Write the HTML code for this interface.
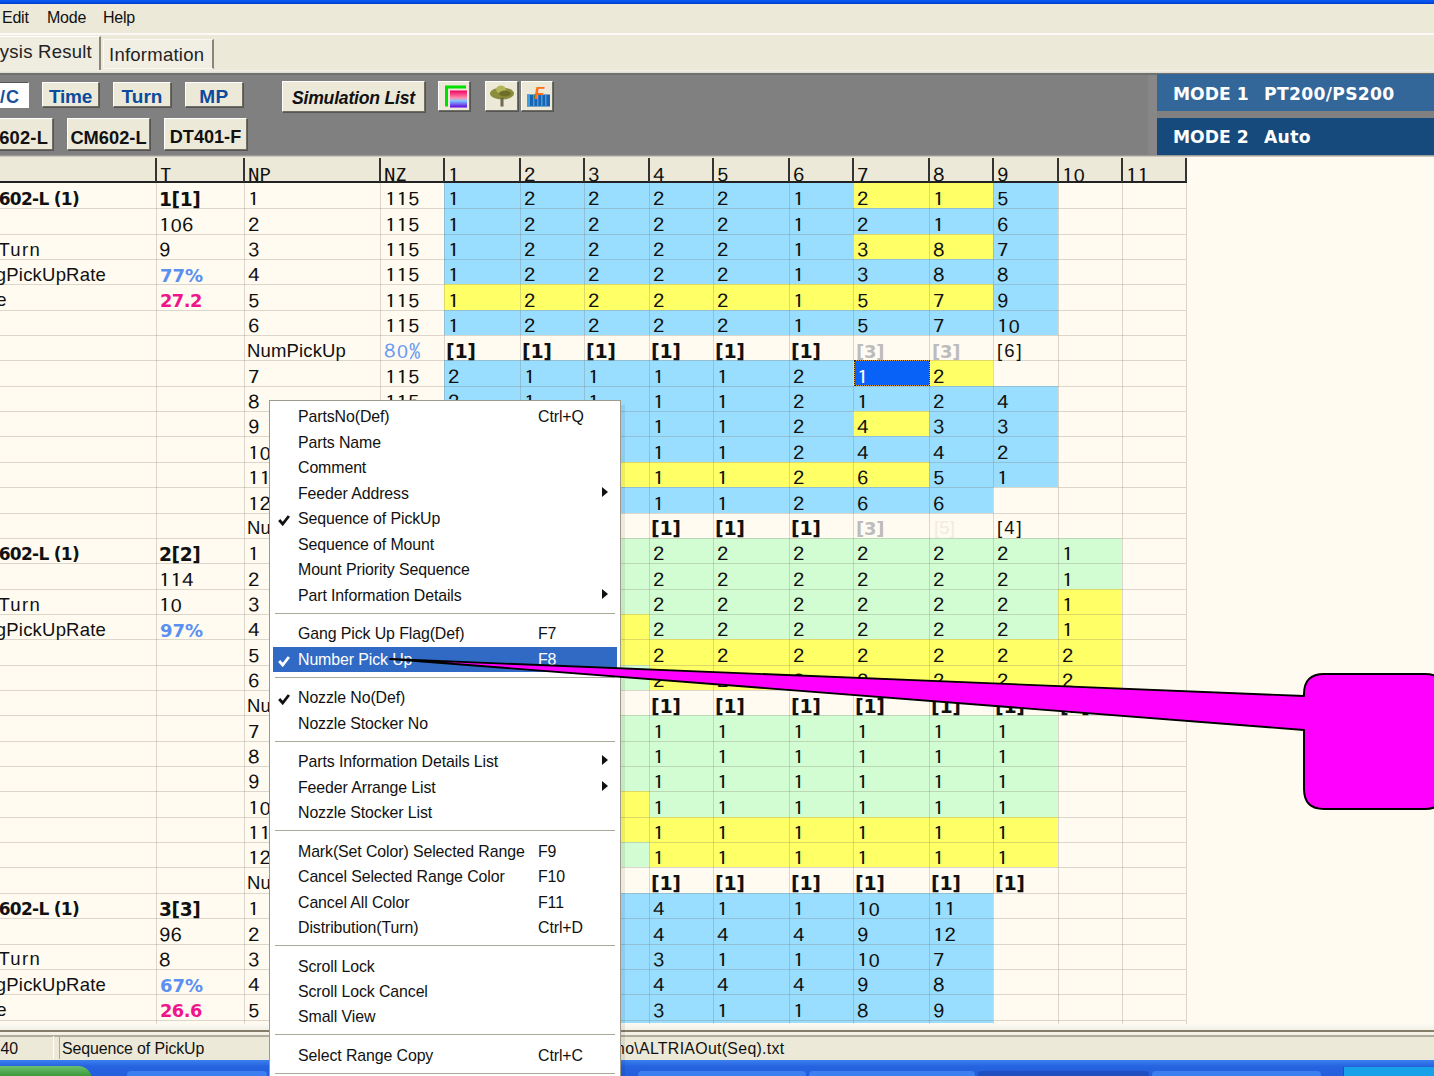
<!DOCTYPE html>
<html lang="en"><head><meta charset="utf-8"><title>Analysis Result</title>
<style>
*{margin:0;padding:0;box-sizing:border-box}
html,body{width:1434px;height:1076px;overflow:hidden;background:#fffbf0;font-family:"Liberation Sans",sans-serif}
#root{position:absolute;left:0;top:0;width:1434px;height:1076px;overflow:hidden;background:#fffbf0}
.abs{position:absolute}
.t{position:absolute;white-space:nowrap;color:#111;font-family:"IPAGothic","Liberation Sans",sans-serif;font-size:18.8px;line-height:25px;height:25px;letter-spacing:0;transform:scaleX(1.22);transform-origin:0 50%}
.b{transform:none;font-weight:bold;letter-spacing:-.4px;font-family:'DejaVu Sans',sans-serif;font-size:17px}
.z{display:inline-block;font-family:"Liberation Sans",sans-serif;font-size:18.3px;transform:scaleX(.88);margin:0 -.4px}
.l{transform:none;font-family:"Liberation Sans",sans-serif;font-size:18.5px;letter-spacing:.15px;margin-top:-.4px}
.hl{position:absolute;left:0;width:1186px;height:1px;background:rgba(125,115,105,.27)}
.vl{position:absolute;top:183px;width:1px;height:841px;background:rgba(125,115,105,.27)}
.cell{position:absolute}
.hd{position:absolute;top:157px;height:26px;background:#ece9d8;border-bottom:2px solid #222}
.hs{position:absolute;top:158px;width:2px;height:24px;background:#333}
.ht{position:absolute;top:163.5px;font-family:"IPAGothic","Liberation Sans",sans-serif;font-size:18.8px;line-height:22px;color:#111;letter-spacing:0;transform:scaleX(1.22);transform-origin:0 50%}
.btn{position:absolute;background:#ece9d8;border:1px solid #fff;border-right-color:#716f64;border-bottom-color:#716f64;box-shadow:1px 1px 0 #555;text-align:center;font-weight:bold;white-space:nowrap}
.mi{position:absolute;left:298px;font-size:15.9px;letter-spacing:-.1px;line-height:20px;color:#111;white-space:nowrap}
.mk{position:absolute;left:538px;font-size:15.9px;letter-spacing:-.1px;line-height:20px;color:#111;white-space:nowrap}
.sep{position:absolute;left:275px;width:340px;height:1px;background:#aca899}
.arr{position:absolute;left:601.5px;width:0;height:0;border-left:6px solid #111;border-top:5.5px solid transparent;border-bottom:5.5px solid transparent}
.chk{position:absolute;left:278px}
</style></head>
<body><div id="root">
<div class="abs" style="left:0;top:0;width:1434px;height:4px;background:linear-gradient(#0c5cf5,#0048e0 70%,#0038c0)"></div>
<div class="abs" style="left:0;top:4px;width:1434px;height:29px;background:#ece9d8"></div>
<div class="abs" style="left:0;top:33px;width:1434px;height:2px;background:#fbfaf6"></div>
<div class="abs" style="left:0;top:35px;width:1434px;height:37px;background:#ece9d8"></div>
<div class="abs" style="left:2px;top:8.3px;font-size:16px;letter-spacing:-.25px;line-height:20px;color:#111">Edit</div>
<div class="abs" style="left:47px;top:8.3px;font-size:16px;letter-spacing:-.25px;line-height:20px;color:#111">Mode</div>
<div class="abs" style="left:103px;top:8.3px;font-size:16px;letter-spacing:-.25px;line-height:20px;color:#111">Help</div>
<div class="abs" style="left:-40px;top:36px;width:141px;height:34px;background:#efece0;border-right:2px solid #8a8778;border-top:1px solid #fff"></div>
<div class="abs" style="left:103px;top:39px;width:111px;height:30px;background:#f1efe4;border:1px solid #faf9f4;border-right:2px solid #8a8778"></div>
<div class="abs" style="left:-100px;top:41px;width:192px;text-align:right;font-size:18.5px;line-height:22px;color:#222;letter-spacing:.25px;white-space:nowrap">Analysis Result</div>
<div class="abs" style="left:109px;top:44px;font-size:18.5px;line-height:22px;color:#222;letter-spacing:.25px;white-space:nowrap">Information</div>
<div class="abs" style="left:0;top:70px;width:1434px;height:3px;background:linear-gradient(#f6f4ec,#dcd9cc)"></div>
<div class="abs" style="left:0;top:73px;width:1434px;height:84px;background:linear-gradient(#808080 0,#808080 82px,#b9b6aa 83px,#dedbd0 84px)"></div>
<div class="abs" style="left:0;top:73px;width:1434px;height:2px;background:#707070"></div>
<div class="btn" style="left:-30px;top:82px;width:59px;height:26px;line-height:28px;font-size:18px;color:#14509a;background:#fff;text-align:right;padding-right:8px;letter-spacing:1px;border-color:#555 #fff #fff #555;box-shadow:none">M/C</div>
<div class="btn" style="left:42px;top:82px;width:57px;height:25px;line-height:26px;font-size:19px;color:#0b4a9c;letter-spacing:-.3px;line-height:27px;">Time</div>
<div class="btn" style="left:113px;top:82px;width:58px;height:25px;line-height:26px;font-size:19px;color:#0b4a9c;letter-spacing:0;line-height:27px;">Turn</div>
<div class="btn" style="left:185px;top:82px;width:58px;height:25px;line-height:26px;font-size:19px;color:#0b4a9c;letter-spacing:.5px;line-height:27px;">MP</div>
<div class="btn" style="left:282px;top:81px;width:143px;height:31px;line-height:32px;font-size:17.6px;color:#111;font-style:italic;letter-spacing:-.2px;">Simulation List</div>
<div class="btn" style="left:438px;top:81px;width:32px;height:30px"><svg width="30" height="28" viewBox="0 1.5 30 28"><defs><linearGradient id="g1" x1="0" y1="0" x2="0" y2="1"><stop offset="0" stop-color="#f00060"/><stop offset=".45" stop-color="#ff90b0"/><stop offset=".6" stop-color="#80c8ff"/><stop offset="1" stop-color="#6000e0"/></linearGradient></defs><path d="M6 26V5H27V8H9V26Z" fill="#00e000"/><rect x="11" y="10" width="17" height="17" fill="url(#g1)"/></svg></div>
<div class="btn" style="left:485px;top:81px;width:33px;height:30px"><svg width="31" height="28" viewBox="0 1.5 31 28"><ellipse cx="16" cy="13" rx="12" ry="6" fill="#8c8c3c"/><ellipse cx="15" cy="9" rx="5" ry="4" fill="#b4b45a"/><ellipse cx="19" cy="13" rx="6" ry="3" fill="#6e6e28"/><rect x="14.5" y="17" width="3" height="9" fill="#6a6a50"/></svg></div>
<div class="btn" style="left:521px;top:81px;width:32px;height:30px"><svg width="30" height="28" viewBox="0 1.5 30 28"><rect x="5" y="14" width="23" height="12" fill="#1c62b0"/><g fill="#3aa0e0"><rect x="5" y="14" width="3" height="12"/><rect x="11" y="14" width="1.5" height="12"/><rect x="15" y="14" width="1.5" height="12"/><rect x="19" y="14" width="1.5" height="12"/><rect x="23" y="14" width="1.5" height="12"/></g><text x="12" y="18" font-family="Liberation Sans, sans-serif" font-weight="bold" font-style="italic" font-size="17" fill="#ff7010">F</text></svg></div>
<div class="btn" style="left:-40px;top:118px;width:93px;height:32px;line-height:37px;font-size:18.3px;color:#111;text-align:right;padding-right:4px;letter-spacing:.2px">CM602-L</div>
<div class="btn" style="left:67px;top:118px;width:83px;height:32px;line-height:33px;font-size:18.3px;color:#111;line-height:37px;">CM602-L</div>
<div class="btn" style="left:164px;top:118px;width:83px;height:32px;line-height:33px;font-size:18.1px;color:#111;line-height:37px;">DT401-F</div>
<div class="abs" style="left:1148px;top:75px;width:9px;height:80px;background:#878787"></div>
<div class="abs" style="left:1157px;top:74px;width:277px;height:37px;background:#336699"></div>
<div class="abs" style="left:1157px;top:118px;width:277px;height:37px;background:#164a7c"></div>
<div class="abs" style="left:1173px;top:82.5px;font-family:DejaVu Sans,sans-serif;font-size:17.2px;letter-spacing:0;line-height:22px;color:#fff;font-weight:bold;white-space:nowrap">MODE 1</div>
<div class="abs" style="left:1264px;top:82.5px;font-family:DejaVu Sans,sans-serif;font-size:17.2px;letter-spacing:.3px;line-height:22px;color:#fff;font-weight:bold;white-space:nowrap">PT200/PS200</div>
<div class="abs" style="left:1173px;top:125.5px;font-family:DejaVu Sans,sans-serif;font-size:17.2px;letter-spacing:0;line-height:22px;color:#fff;font-weight:bold;white-space:nowrap">MODE 2</div>
<div class="abs" style="left:1264px;top:125.5px;font-family:DejaVu Sans,sans-serif;font-size:17.2px;letter-spacing:.3px;line-height:22px;color:#fff;font-weight:bold;white-space:nowrap">Auto</div>
<div class="hd" style="left:0;width:1187px"></div>
<div class="hs" style="left:155px"></div>
<div class="ht" style="left:160px">T</div>
<div class="hs" style="left:243px"></div>
<div class="ht" style="left:248px">NP</div>
<div class="hs" style="left:379px"></div>
<div class="ht" style="left:384px">NZ</div>
<div class="hs" style="left:443px"></div>
<div class="ht" style="left:448px">1</div>
<div class="hs" style="left:519px"></div>
<div class="ht" style="left:524px">2</div>
<div class="hs" style="left:583px"></div>
<div class="ht" style="left:588px">3</div>
<div class="hs" style="left:648px"></div>
<div class="ht" style="left:653px">4</div>
<div class="hs" style="left:712px"></div>
<div class="ht" style="left:717px">5</div>
<div class="hs" style="left:788px"></div>
<div class="ht" style="left:793px">6</div>
<div class="hs" style="left:852px"></div>
<div class="ht" style="left:857px">7</div>
<div class="hs" style="left:928px"></div>
<div class="ht" style="left:933px">8</div>
<div class="hs" style="left:992px"></div>
<div class="ht" style="left:997px">9</div>
<div class="hs" style="left:1057px"></div>
<div class="ht" style="left:1062px">1<span class="z">0</span></div>
<div class="hs" style="left:1121px"></div>
<div class="ht" style="left:1126px">11</div>
<div class="hs" style="left:1185px"></div>
<div class="cell" style="left:444px;top:183px;width:76px;height:25px;background:#99ddff"></div>
<div class="cell" style="left:520px;top:183px;width:64px;height:25px;background:#99ddff"></div>
<div class="cell" style="left:584px;top:183px;width:65px;height:25px;background:#99ddff"></div>
<div class="cell" style="left:649px;top:183px;width:64px;height:25px;background:#99ddff"></div>
<div class="cell" style="left:713px;top:183px;width:76px;height:25px;background:#99ddff"></div>
<div class="cell" style="left:789px;top:183px;width:64px;height:25px;background:#99ddff"></div>
<div class="cell" style="left:853px;top:183px;width:76px;height:25px;background:#ffff66"></div>
<div class="cell" style="left:929px;top:183px;width:64px;height:25px;background:#ffff66"></div>
<div class="cell" style="left:993px;top:183px;width:65px;height:25px;background:#99ddff"></div>
<div class="cell" style="left:444px;top:208px;width:76px;height:26px;background:#99ddff"></div>
<div class="cell" style="left:520px;top:208px;width:64px;height:26px;background:#99ddff"></div>
<div class="cell" style="left:584px;top:208px;width:65px;height:26px;background:#99ddff"></div>
<div class="cell" style="left:649px;top:208px;width:64px;height:26px;background:#99ddff"></div>
<div class="cell" style="left:713px;top:208px;width:76px;height:26px;background:#99ddff"></div>
<div class="cell" style="left:789px;top:208px;width:64px;height:26px;background:#99ddff"></div>
<div class="cell" style="left:853px;top:208px;width:76px;height:26px;background:#99ddff"></div>
<div class="cell" style="left:929px;top:208px;width:64px;height:26px;background:#99ddff"></div>
<div class="cell" style="left:993px;top:208px;width:65px;height:26px;background:#99ddff"></div>
<div class="cell" style="left:444px;top:234px;width:76px;height:25px;background:#99ddff"></div>
<div class="cell" style="left:520px;top:234px;width:64px;height:25px;background:#99ddff"></div>
<div class="cell" style="left:584px;top:234px;width:65px;height:25px;background:#99ddff"></div>
<div class="cell" style="left:649px;top:234px;width:64px;height:25px;background:#99ddff"></div>
<div class="cell" style="left:713px;top:234px;width:76px;height:25px;background:#99ddff"></div>
<div class="cell" style="left:789px;top:234px;width:64px;height:25px;background:#99ddff"></div>
<div class="cell" style="left:853px;top:234px;width:76px;height:25px;background:#ffff66"></div>
<div class="cell" style="left:929px;top:234px;width:64px;height:25px;background:#ffff66"></div>
<div class="cell" style="left:993px;top:234px;width:65px;height:25px;background:#99ddff"></div>
<div class="cell" style="left:444px;top:259px;width:76px;height:25px;background:#99ddff"></div>
<div class="cell" style="left:520px;top:259px;width:64px;height:25px;background:#99ddff"></div>
<div class="cell" style="left:584px;top:259px;width:65px;height:25px;background:#99ddff"></div>
<div class="cell" style="left:649px;top:259px;width:64px;height:25px;background:#99ddff"></div>
<div class="cell" style="left:713px;top:259px;width:76px;height:25px;background:#99ddff"></div>
<div class="cell" style="left:789px;top:259px;width:64px;height:25px;background:#99ddff"></div>
<div class="cell" style="left:853px;top:259px;width:76px;height:25px;background:#99ddff"></div>
<div class="cell" style="left:929px;top:259px;width:64px;height:25px;background:#99ddff"></div>
<div class="cell" style="left:993px;top:259px;width:65px;height:25px;background:#99ddff"></div>
<div class="cell" style="left:444px;top:284px;width:76px;height:26px;background:#ffff66"></div>
<div class="cell" style="left:520px;top:284px;width:64px;height:26px;background:#ffff66"></div>
<div class="cell" style="left:584px;top:284px;width:65px;height:26px;background:#ffff66"></div>
<div class="cell" style="left:649px;top:284px;width:64px;height:26px;background:#ffff66"></div>
<div class="cell" style="left:713px;top:284px;width:76px;height:26px;background:#ffff66"></div>
<div class="cell" style="left:789px;top:284px;width:64px;height:26px;background:#ffff66"></div>
<div class="cell" style="left:853px;top:284px;width:76px;height:26px;background:#ffff66"></div>
<div class="cell" style="left:929px;top:284px;width:64px;height:26px;background:#ffff66"></div>
<div class="cell" style="left:993px;top:284px;width:65px;height:26px;background:#99ddff"></div>
<div class="cell" style="left:444px;top:310px;width:76px;height:25px;background:#99ddff"></div>
<div class="cell" style="left:520px;top:310px;width:64px;height:25px;background:#99ddff"></div>
<div class="cell" style="left:584px;top:310px;width:65px;height:25px;background:#99ddff"></div>
<div class="cell" style="left:649px;top:310px;width:64px;height:25px;background:#99ddff"></div>
<div class="cell" style="left:713px;top:310px;width:76px;height:25px;background:#99ddff"></div>
<div class="cell" style="left:789px;top:310px;width:64px;height:25px;background:#99ddff"></div>
<div class="cell" style="left:853px;top:310px;width:76px;height:25px;background:#99ddff"></div>
<div class="cell" style="left:929px;top:310px;width:64px;height:25px;background:#99ddff"></div>
<div class="cell" style="left:993px;top:310px;width:65px;height:25px;background:#99ddff"></div>
<div class="cell" style="left:444px;top:360px;width:76px;height:26px;background:#99ddff"></div>
<div class="cell" style="left:520px;top:360px;width:64px;height:26px;background:#99ddff"></div>
<div class="cell" style="left:584px;top:360px;width:65px;height:26px;background:#99ddff"></div>
<div class="cell" style="left:649px;top:360px;width:64px;height:26px;background:#99ddff"></div>
<div class="cell" style="left:713px;top:360px;width:76px;height:26px;background:#99ddff"></div>
<div class="cell" style="left:789px;top:360px;width:64px;height:26px;background:#99ddff"></div>
<div class="cell" style="left:929px;top:360px;width:64px;height:26px;background:#ffff66"></div>
<div class="cell" style="left:444px;top:386px;width:76px;height:25px;background:#99ddff"></div>
<div class="cell" style="left:520px;top:386px;width:64px;height:25px;background:#99ddff"></div>
<div class="cell" style="left:584px;top:386px;width:65px;height:25px;background:#99ddff"></div>
<div class="cell" style="left:649px;top:386px;width:64px;height:25px;background:#99ddff"></div>
<div class="cell" style="left:713px;top:386px;width:76px;height:25px;background:#99ddff"></div>
<div class="cell" style="left:789px;top:386px;width:64px;height:25px;background:#99ddff"></div>
<div class="cell" style="left:853px;top:386px;width:76px;height:25px;background:#99ddff"></div>
<div class="cell" style="left:929px;top:386px;width:64px;height:25px;background:#99ddff"></div>
<div class="cell" style="left:993px;top:386px;width:65px;height:25px;background:#99ddff"></div>
<div class="cell" style="left:444px;top:411px;width:76px;height:25px;background:#99ddff"></div>
<div class="cell" style="left:520px;top:411px;width:64px;height:25px;background:#99ddff"></div>
<div class="cell" style="left:584px;top:411px;width:65px;height:25px;background:#99ddff"></div>
<div class="cell" style="left:649px;top:411px;width:64px;height:25px;background:#99ddff"></div>
<div class="cell" style="left:713px;top:411px;width:76px;height:25px;background:#99ddff"></div>
<div class="cell" style="left:789px;top:411px;width:64px;height:25px;background:#99ddff"></div>
<div class="cell" style="left:853px;top:411px;width:76px;height:25px;background:#ffff66"></div>
<div class="cell" style="left:929px;top:411px;width:64px;height:25px;background:#99ddff"></div>
<div class="cell" style="left:993px;top:411px;width:65px;height:25px;background:#99ddff"></div>
<div class="cell" style="left:444px;top:436px;width:76px;height:26px;background:#99ddff"></div>
<div class="cell" style="left:520px;top:436px;width:64px;height:26px;background:#99ddff"></div>
<div class="cell" style="left:584px;top:436px;width:65px;height:26px;background:#99ddff"></div>
<div class="cell" style="left:649px;top:436px;width:64px;height:26px;background:#99ddff"></div>
<div class="cell" style="left:713px;top:436px;width:76px;height:26px;background:#99ddff"></div>
<div class="cell" style="left:789px;top:436px;width:64px;height:26px;background:#99ddff"></div>
<div class="cell" style="left:853px;top:436px;width:76px;height:26px;background:#99ddff"></div>
<div class="cell" style="left:929px;top:436px;width:64px;height:26px;background:#99ddff"></div>
<div class="cell" style="left:993px;top:436px;width:65px;height:26px;background:#99ddff"></div>
<div class="cell" style="left:444px;top:462px;width:76px;height:25px;background:#ffff66"></div>
<div class="cell" style="left:520px;top:462px;width:64px;height:25px;background:#ffff66"></div>
<div class="cell" style="left:584px;top:462px;width:65px;height:25px;background:#ffff66"></div>
<div class="cell" style="left:649px;top:462px;width:64px;height:25px;background:#ffff66"></div>
<div class="cell" style="left:713px;top:462px;width:76px;height:25px;background:#ffff66"></div>
<div class="cell" style="left:789px;top:462px;width:64px;height:25px;background:#ffff66"></div>
<div class="cell" style="left:853px;top:462px;width:76px;height:25px;background:#ffff66"></div>
<div class="cell" style="left:929px;top:462px;width:64px;height:25px;background:#99ddff"></div>
<div class="cell" style="left:993px;top:462px;width:65px;height:25px;background:#99ddff"></div>
<div class="cell" style="left:444px;top:487px;width:76px;height:26px;background:#99ddff"></div>
<div class="cell" style="left:520px;top:487px;width:64px;height:26px;background:#99ddff"></div>
<div class="cell" style="left:584px;top:487px;width:65px;height:26px;background:#99ddff"></div>
<div class="cell" style="left:649px;top:487px;width:64px;height:26px;background:#99ddff"></div>
<div class="cell" style="left:713px;top:487px;width:76px;height:26px;background:#99ddff"></div>
<div class="cell" style="left:789px;top:487px;width:64px;height:26px;background:#99ddff"></div>
<div class="cell" style="left:853px;top:487px;width:76px;height:26px;background:#99ddff"></div>
<div class="cell" style="left:929px;top:487px;width:64px;height:26px;background:#99ddff"></div>
<div class="cell" style="left:444px;top:538px;width:76px;height:25px;background:#d2fdd2"></div>
<div class="cell" style="left:520px;top:538px;width:64px;height:25px;background:#d2fdd2"></div>
<div class="cell" style="left:584px;top:538px;width:65px;height:25px;background:#d2fdd2"></div>
<div class="cell" style="left:649px;top:538px;width:64px;height:25px;background:#d2fdd2"></div>
<div class="cell" style="left:713px;top:538px;width:76px;height:25px;background:#d2fdd2"></div>
<div class="cell" style="left:789px;top:538px;width:64px;height:25px;background:#d2fdd2"></div>
<div class="cell" style="left:853px;top:538px;width:76px;height:25px;background:#d2fdd2"></div>
<div class="cell" style="left:929px;top:538px;width:64px;height:25px;background:#d2fdd2"></div>
<div class="cell" style="left:993px;top:538px;width:65px;height:25px;background:#d2fdd2"></div>
<div class="cell" style="left:1058px;top:538px;width:64px;height:25px;background:#d2fdd2"></div>
<div class="cell" style="left:444px;top:563px;width:76px;height:26px;background:#d2fdd2"></div>
<div class="cell" style="left:520px;top:563px;width:64px;height:26px;background:#d2fdd2"></div>
<div class="cell" style="left:584px;top:563px;width:65px;height:26px;background:#d2fdd2"></div>
<div class="cell" style="left:649px;top:563px;width:64px;height:26px;background:#d2fdd2"></div>
<div class="cell" style="left:713px;top:563px;width:76px;height:26px;background:#d2fdd2"></div>
<div class="cell" style="left:789px;top:563px;width:64px;height:26px;background:#d2fdd2"></div>
<div class="cell" style="left:853px;top:563px;width:76px;height:26px;background:#d2fdd2"></div>
<div class="cell" style="left:929px;top:563px;width:64px;height:26px;background:#d2fdd2"></div>
<div class="cell" style="left:993px;top:563px;width:65px;height:26px;background:#d2fdd2"></div>
<div class="cell" style="left:1058px;top:563px;width:64px;height:26px;background:#d2fdd2"></div>
<div class="cell" style="left:444px;top:589px;width:76px;height:25px;background:#d2fdd2"></div>
<div class="cell" style="left:520px;top:589px;width:64px;height:25px;background:#d2fdd2"></div>
<div class="cell" style="left:584px;top:589px;width:65px;height:25px;background:#d2fdd2"></div>
<div class="cell" style="left:649px;top:589px;width:64px;height:25px;background:#d2fdd2"></div>
<div class="cell" style="left:713px;top:589px;width:76px;height:25px;background:#d2fdd2"></div>
<div class="cell" style="left:789px;top:589px;width:64px;height:25px;background:#d2fdd2"></div>
<div class="cell" style="left:853px;top:589px;width:76px;height:25px;background:#d2fdd2"></div>
<div class="cell" style="left:929px;top:589px;width:64px;height:25px;background:#d2fdd2"></div>
<div class="cell" style="left:993px;top:589px;width:65px;height:25px;background:#d2fdd2"></div>
<div class="cell" style="left:1058px;top:589px;width:64px;height:25px;background:#ffff66"></div>
<div class="cell" style="left:444px;top:614px;width:76px;height:25px;background:#ffff66"></div>
<div class="cell" style="left:520px;top:614px;width:64px;height:25px;background:#ffff66"></div>
<div class="cell" style="left:584px;top:614px;width:65px;height:25px;background:#ffff66"></div>
<div class="cell" style="left:649px;top:614px;width:64px;height:25px;background:#d2fdd2"></div>
<div class="cell" style="left:713px;top:614px;width:76px;height:25px;background:#d2fdd2"></div>
<div class="cell" style="left:789px;top:614px;width:64px;height:25px;background:#d2fdd2"></div>
<div class="cell" style="left:853px;top:614px;width:76px;height:25px;background:#d2fdd2"></div>
<div class="cell" style="left:929px;top:614px;width:64px;height:25px;background:#d2fdd2"></div>
<div class="cell" style="left:993px;top:614px;width:65px;height:25px;background:#d2fdd2"></div>
<div class="cell" style="left:1058px;top:614px;width:64px;height:25px;background:#ffff66"></div>
<div class="cell" style="left:444px;top:639px;width:76px;height:26px;background:#ffff66"></div>
<div class="cell" style="left:520px;top:639px;width:64px;height:26px;background:#ffff66"></div>
<div class="cell" style="left:584px;top:639px;width:65px;height:26px;background:#ffff66"></div>
<div class="cell" style="left:649px;top:639px;width:64px;height:26px;background:#ffff66"></div>
<div class="cell" style="left:713px;top:639px;width:76px;height:26px;background:#ffff66"></div>
<div class="cell" style="left:789px;top:639px;width:64px;height:26px;background:#ffff66"></div>
<div class="cell" style="left:853px;top:639px;width:76px;height:26px;background:#ffff66"></div>
<div class="cell" style="left:929px;top:639px;width:64px;height:26px;background:#ffff66"></div>
<div class="cell" style="left:993px;top:639px;width:65px;height:26px;background:#ffff66"></div>
<div class="cell" style="left:1058px;top:639px;width:64px;height:26px;background:#ffff66"></div>
<div class="cell" style="left:444px;top:665px;width:76px;height:25px;background:#d2fdd2"></div>
<div class="cell" style="left:520px;top:665px;width:64px;height:25px;background:#d2fdd2"></div>
<div class="cell" style="left:584px;top:665px;width:65px;height:25px;background:#d2fdd2"></div>
<div class="cell" style="left:649px;top:665px;width:64px;height:25px;background:#ffff66"></div>
<div class="cell" style="left:713px;top:665px;width:76px;height:25px;background:#ffff66"></div>
<div class="cell" style="left:789px;top:665px;width:64px;height:25px;background:#ffff66"></div>
<div class="cell" style="left:853px;top:665px;width:76px;height:25px;background:#ffff66"></div>
<div class="cell" style="left:929px;top:665px;width:64px;height:25px;background:#ffff66"></div>
<div class="cell" style="left:993px;top:665px;width:65px;height:25px;background:#ffff66"></div>
<div class="cell" style="left:1058px;top:665px;width:64px;height:25px;background:#ffff66"></div>
<div class="cell" style="left:444px;top:715px;width:76px;height:26px;background:#d2fdd2"></div>
<div class="cell" style="left:520px;top:715px;width:64px;height:26px;background:#d2fdd2"></div>
<div class="cell" style="left:584px;top:715px;width:65px;height:26px;background:#d2fdd2"></div>
<div class="cell" style="left:649px;top:715px;width:64px;height:26px;background:#d2fdd2"></div>
<div class="cell" style="left:713px;top:715px;width:76px;height:26px;background:#d2fdd2"></div>
<div class="cell" style="left:789px;top:715px;width:64px;height:26px;background:#d2fdd2"></div>
<div class="cell" style="left:853px;top:715px;width:76px;height:26px;background:#d2fdd2"></div>
<div class="cell" style="left:929px;top:715px;width:64px;height:26px;background:#d2fdd2"></div>
<div class="cell" style="left:993px;top:715px;width:65px;height:26px;background:#d2fdd2"></div>
<div class="cell" style="left:444px;top:741px;width:76px;height:25px;background:#d2fdd2"></div>
<div class="cell" style="left:520px;top:741px;width:64px;height:25px;background:#d2fdd2"></div>
<div class="cell" style="left:584px;top:741px;width:65px;height:25px;background:#d2fdd2"></div>
<div class="cell" style="left:649px;top:741px;width:64px;height:25px;background:#d2fdd2"></div>
<div class="cell" style="left:713px;top:741px;width:76px;height:25px;background:#d2fdd2"></div>
<div class="cell" style="left:789px;top:741px;width:64px;height:25px;background:#d2fdd2"></div>
<div class="cell" style="left:853px;top:741px;width:76px;height:25px;background:#d2fdd2"></div>
<div class="cell" style="left:929px;top:741px;width:64px;height:25px;background:#d2fdd2"></div>
<div class="cell" style="left:993px;top:741px;width:65px;height:25px;background:#d2fdd2"></div>
<div class="cell" style="left:444px;top:766px;width:76px;height:25px;background:#d2fdd2"></div>
<div class="cell" style="left:520px;top:766px;width:64px;height:25px;background:#d2fdd2"></div>
<div class="cell" style="left:584px;top:766px;width:65px;height:25px;background:#d2fdd2"></div>
<div class="cell" style="left:649px;top:766px;width:64px;height:25px;background:#d2fdd2"></div>
<div class="cell" style="left:713px;top:766px;width:76px;height:25px;background:#d2fdd2"></div>
<div class="cell" style="left:789px;top:766px;width:64px;height:25px;background:#d2fdd2"></div>
<div class="cell" style="left:853px;top:766px;width:76px;height:25px;background:#d2fdd2"></div>
<div class="cell" style="left:929px;top:766px;width:64px;height:25px;background:#d2fdd2"></div>
<div class="cell" style="left:993px;top:766px;width:65px;height:25px;background:#d2fdd2"></div>
<div class="cell" style="left:444px;top:791px;width:76px;height:26px;background:#ffff66"></div>
<div class="cell" style="left:520px;top:791px;width:64px;height:26px;background:#ffff66"></div>
<div class="cell" style="left:584px;top:791px;width:65px;height:26px;background:#ffff66"></div>
<div class="cell" style="left:649px;top:791px;width:64px;height:26px;background:#d2fdd2"></div>
<div class="cell" style="left:713px;top:791px;width:76px;height:26px;background:#d2fdd2"></div>
<div class="cell" style="left:789px;top:791px;width:64px;height:26px;background:#d2fdd2"></div>
<div class="cell" style="left:853px;top:791px;width:76px;height:26px;background:#d2fdd2"></div>
<div class="cell" style="left:929px;top:791px;width:64px;height:26px;background:#d2fdd2"></div>
<div class="cell" style="left:993px;top:791px;width:65px;height:26px;background:#d2fdd2"></div>
<div class="cell" style="left:444px;top:817px;width:76px;height:25px;background:#ffff66"></div>
<div class="cell" style="left:520px;top:817px;width:64px;height:25px;background:#ffff66"></div>
<div class="cell" style="left:584px;top:817px;width:65px;height:25px;background:#ffff66"></div>
<div class="cell" style="left:649px;top:817px;width:64px;height:25px;background:#ffff66"></div>
<div class="cell" style="left:713px;top:817px;width:76px;height:25px;background:#ffff66"></div>
<div class="cell" style="left:789px;top:817px;width:64px;height:25px;background:#ffff66"></div>
<div class="cell" style="left:853px;top:817px;width:76px;height:25px;background:#ffff66"></div>
<div class="cell" style="left:929px;top:817px;width:64px;height:25px;background:#ffff66"></div>
<div class="cell" style="left:993px;top:817px;width:65px;height:25px;background:#ffff66"></div>
<div class="cell" style="left:444px;top:842px;width:76px;height:25px;background:#d2fdd2"></div>
<div class="cell" style="left:520px;top:842px;width:64px;height:25px;background:#d2fdd2"></div>
<div class="cell" style="left:584px;top:842px;width:65px;height:25px;background:#d2fdd2"></div>
<div class="cell" style="left:649px;top:842px;width:64px;height:25px;background:#ffff66"></div>
<div class="cell" style="left:713px;top:842px;width:76px;height:25px;background:#ffff66"></div>
<div class="cell" style="left:789px;top:842px;width:64px;height:25px;background:#ffff66"></div>
<div class="cell" style="left:853px;top:842px;width:76px;height:25px;background:#ffff66"></div>
<div class="cell" style="left:929px;top:842px;width:64px;height:25px;background:#ffff66"></div>
<div class="cell" style="left:993px;top:842px;width:65px;height:25px;background:#ffff66"></div>
<div class="cell" style="left:444px;top:893px;width:76px;height:25px;background:#99ddff"></div>
<div class="cell" style="left:520px;top:893px;width:64px;height:25px;background:#99ddff"></div>
<div class="cell" style="left:584px;top:893px;width:65px;height:25px;background:#99ddff"></div>
<div class="cell" style="left:649px;top:893px;width:64px;height:25px;background:#99ddff"></div>
<div class="cell" style="left:713px;top:893px;width:76px;height:25px;background:#99ddff"></div>
<div class="cell" style="left:789px;top:893px;width:64px;height:25px;background:#99ddff"></div>
<div class="cell" style="left:853px;top:893px;width:76px;height:25px;background:#99ddff"></div>
<div class="cell" style="left:929px;top:893px;width:64px;height:25px;background:#99ddff"></div>
<div class="cell" style="left:444px;top:918px;width:76px;height:26px;background:#99ddff"></div>
<div class="cell" style="left:520px;top:918px;width:64px;height:26px;background:#99ddff"></div>
<div class="cell" style="left:584px;top:918px;width:65px;height:26px;background:#99ddff"></div>
<div class="cell" style="left:649px;top:918px;width:64px;height:26px;background:#99ddff"></div>
<div class="cell" style="left:713px;top:918px;width:76px;height:26px;background:#99ddff"></div>
<div class="cell" style="left:789px;top:918px;width:64px;height:26px;background:#99ddff"></div>
<div class="cell" style="left:853px;top:918px;width:76px;height:26px;background:#99ddff"></div>
<div class="cell" style="left:929px;top:918px;width:64px;height:26px;background:#99ddff"></div>
<div class="cell" style="left:444px;top:944px;width:76px;height:25px;background:#99ddff"></div>
<div class="cell" style="left:520px;top:944px;width:64px;height:25px;background:#99ddff"></div>
<div class="cell" style="left:584px;top:944px;width:65px;height:25px;background:#99ddff"></div>
<div class="cell" style="left:649px;top:944px;width:64px;height:25px;background:#99ddff"></div>
<div class="cell" style="left:713px;top:944px;width:76px;height:25px;background:#99ddff"></div>
<div class="cell" style="left:789px;top:944px;width:64px;height:25px;background:#99ddff"></div>
<div class="cell" style="left:853px;top:944px;width:76px;height:25px;background:#99ddff"></div>
<div class="cell" style="left:929px;top:944px;width:64px;height:25px;background:#99ddff"></div>
<div class="cell" style="left:444px;top:969px;width:76px;height:25px;background:#99ddff"></div>
<div class="cell" style="left:520px;top:969px;width:64px;height:25px;background:#99ddff"></div>
<div class="cell" style="left:584px;top:969px;width:65px;height:25px;background:#99ddff"></div>
<div class="cell" style="left:649px;top:969px;width:64px;height:25px;background:#99ddff"></div>
<div class="cell" style="left:713px;top:969px;width:76px;height:25px;background:#99ddff"></div>
<div class="cell" style="left:789px;top:969px;width:64px;height:25px;background:#99ddff"></div>
<div class="cell" style="left:853px;top:969px;width:76px;height:25px;background:#99ddff"></div>
<div class="cell" style="left:929px;top:969px;width:64px;height:25px;background:#99ddff"></div>
<div class="cell" style="left:444px;top:994px;width:76px;height:26px;background:#99ddff"></div>
<div class="cell" style="left:520px;top:994px;width:64px;height:26px;background:#99ddff"></div>
<div class="cell" style="left:584px;top:994px;width:65px;height:26px;background:#99ddff"></div>
<div class="cell" style="left:649px;top:994px;width:64px;height:26px;background:#99ddff"></div>
<div class="cell" style="left:713px;top:994px;width:76px;height:26px;background:#99ddff"></div>
<div class="cell" style="left:789px;top:994px;width:64px;height:26px;background:#99ddff"></div>
<div class="cell" style="left:853px;top:994px;width:76px;height:26px;background:#99ddff"></div>
<div class="cell" style="left:929px;top:994px;width:64px;height:26px;background:#99ddff"></div>
<div class="cell" style="left:444px;top:1020px;width:549px;height:3px;background:#99ddff"></div>
<div class="hl" style="top:208px"></div>
<div class="hl" style="top:234px"></div>
<div class="hl" style="top:259px"></div>
<div class="hl" style="top:284px"></div>
<div class="hl" style="top:310px"></div>
<div class="hl" style="top:335px"></div>
<div class="hl" style="top:360px"></div>
<div class="hl" style="top:386px"></div>
<div class="hl" style="top:411px"></div>
<div class="hl" style="top:436px"></div>
<div class="hl" style="top:462px"></div>
<div class="hl" style="top:487px"></div>
<div class="hl" style="top:513px"></div>
<div class="hl" style="top:538px"></div>
<div class="hl" style="top:563px"></div>
<div class="hl" style="top:589px"></div>
<div class="hl" style="top:614px"></div>
<div class="hl" style="top:639px"></div>
<div class="hl" style="top:665px"></div>
<div class="hl" style="top:690px"></div>
<div class="hl" style="top:715px"></div>
<div class="hl" style="top:741px"></div>
<div class="hl" style="top:766px"></div>
<div class="hl" style="top:791px"></div>
<div class="hl" style="top:817px"></div>
<div class="hl" style="top:842px"></div>
<div class="hl" style="top:867px"></div>
<div class="hl" style="top:893px"></div>
<div class="hl" style="top:918px"></div>
<div class="hl" style="top:944px"></div>
<div class="hl" style="top:969px"></div>
<div class="hl" style="top:994px"></div>
<div class="hl" style="top:1020px"></div>
<div class="vl" style="left:156px"></div>
<div class="vl" style="left:244px"></div>
<div class="vl" style="left:380px"></div>
<div class="vl" style="left:444px"></div>
<div class="vl" style="left:520px"></div>
<div class="vl" style="left:584px"></div>
<div class="vl" style="left:649px"></div>
<div class="vl" style="left:713px"></div>
<div class="vl" style="left:789px"></div>
<div class="vl" style="left:853px"></div>
<div class="vl" style="left:929px"></div>
<div class="vl" style="left:993px"></div>
<div class="vl" style="left:1058px"></div>
<div class="vl" style="left:1122px"></div>
<div class="vl" style="left:1186px"></div>
<div class="cell" style="left:854px;top:360px;width:76px;height:26px;background:#f0a828;border:1.6px dotted #2a2418"><div style="position:absolute;left:0;top:0;right:0;bottom:0;background:#0862f8"></div></div>
<div class="t b" style="left:-221px;width:300px;text-align:right;top:186.3px;letter-spacing:-.7px;margin-top:1px;">CM602-L (1)</div>
<div class="t b" style="left:159px;top:186.3px;font-size:18.6px;margin-top:.5px;">1[1]</div>
<div class="t" style="left:159px;top:211.7px;">1<span class="z">0</span>6</div>
<div class="t l" style="left:-259px;width:300px;text-align:right;top:237.0px;letter-spacing:1.3px;">NumTurn</div>
<div class="t" style="left:159px;top:237.0px;">9</div>
<div class="t l" style="left:-194px;width:300px;text-align:right;top:262.4px;letter-spacing:.2px;">AvgPickUpRate</div>
<div class="t b" style="left:160px;top:262.4px;color:#5b8ff0;letter-spacing:0;font-size:18px;margin-top:.8px;">77%</div>
<div class="t l" style="left:-293px;width:300px;text-align:right;top:287.7px;letter-spacing:.5px;">Time</div>
<div class="t b" style="left:160px;top:287.7px;color:#f0148c;letter-spacing:-.5px;font-size:17.8px;margin-top:.8px;">27.2</div>
<div class="t" style="left:248px;top:186.3px;">1</div>
<div class="t" style="left:385px;top:186.3px;">115</div>
<div class="t" style="left:248px;top:211.7px;">2</div>
<div class="t" style="left:385px;top:211.7px;">115</div>
<div class="t" style="left:248px;top:237.0px;">3</div>
<div class="t" style="left:385px;top:237.0px;">115</div>
<div class="t" style="left:248px;top:262.4px;">4</div>
<div class="t" style="left:385px;top:262.4px;">115</div>
<div class="t" style="left:248px;top:287.7px;">5</div>
<div class="t" style="left:385px;top:287.7px;">115</div>
<div class="t" style="left:248px;top:313.1px;">6</div>
<div class="t" style="left:385px;top:313.1px;">115</div>
<div class="t l" style="left:247px;top:338.4px;">NumPickUp</div>
<div class="t" style="left:384px;top:338.4px;color:#6a9cf0;letter-spacing:.8px;">8<span class="z">0</span>%</div>
<div class="t" style="left:248px;top:363.8px;">7</div>
<div class="t" style="left:385px;top:363.8px;">115</div>
<div class="t" style="left:248px;top:389.1px;">8</div>
<div class="t" style="left:385px;top:389.1px;">115</div>
<div class="t" style="left:248px;top:414.4px;">9</div>
<div class="t" style="left:385px;top:414.4px;">115</div>
<div class="t" style="left:248px;top:439.8px;">1<span class="z">0</span></div>
<div class="t" style="left:385px;top:439.8px;">115</div>
<div class="t" style="left:248px;top:465.2px;">11</div>
<div class="t" style="left:385px;top:465.2px;">115</div>
<div class="t" style="left:248px;top:490.5px;">12</div>
<div class="t" style="left:385px;top:490.5px;">115</div>
<div class="t l" style="left:247px;top:515.8px;">NumPickUp</div>
<div class="t" style="left:384px;top:515.8px;color:#6a9cf0;letter-spacing:.8px;">67%</div>
<div class="t b" style="left:-221px;width:300px;text-align:right;top:541.2px;letter-spacing:-.7px;margin-top:1px;">CM602-L (1)</div>
<div class="t b" style="left:159px;top:541.2px;font-size:18.6px;margin-top:.5px;">2[2]</div>
<div class="t" style="left:159px;top:566.5px;">114</div>
<div class="t l" style="left:-259px;width:300px;text-align:right;top:591.9px;letter-spacing:1.3px;">NumTurn</div>
<div class="t" style="left:159px;top:591.9px;">1<span class="z">0</span></div>
<div class="t l" style="left:-194px;width:300px;text-align:right;top:617.2px;letter-spacing:.2px;">AvgPickUpRate</div>
<div class="t b" style="left:160px;top:617.2px;color:#5b8ff0;letter-spacing:0;font-size:18px;margin-top:.8px;">97%</div>
<div class="t" style="left:248px;top:541.2px;">1</div>
<div class="t" style="left:385px;top:541.2px;">115</div>
<div class="t" style="left:248px;top:566.5px;">2</div>
<div class="t" style="left:385px;top:566.5px;">115</div>
<div class="t" style="left:248px;top:591.9px;">3</div>
<div class="t" style="left:385px;top:591.9px;">115</div>
<div class="t" style="left:248px;top:617.2px;">4</div>
<div class="t" style="left:385px;top:617.2px;">115</div>
<div class="t" style="left:248px;top:642.6px;">5</div>
<div class="t" style="left:385px;top:642.6px;">115</div>
<div class="t" style="left:248px;top:668.0px;">6</div>
<div class="t" style="left:385px;top:668.0px;">115</div>
<div class="t l" style="left:247px;top:693.3px;">NumPickUp</div>
<div class="t" style="left:384px;top:693.3px;color:#6a9cf0;letter-spacing:.8px;">1<span class="z">0</span><span class="z">0</span>%</div>
<div class="t" style="left:248px;top:718.6px;">7</div>
<div class="t" style="left:385px;top:718.6px;">115</div>
<div class="t" style="left:248px;top:744.0px;">8</div>
<div class="t" style="left:385px;top:744.0px;">115</div>
<div class="t" style="left:248px;top:769.4px;">9</div>
<div class="t" style="left:385px;top:769.4px;">115</div>
<div class="t" style="left:248px;top:794.7px;">1<span class="z">0</span></div>
<div class="t" style="left:385px;top:794.7px;">115</div>
<div class="t" style="left:248px;top:820.0px;">11</div>
<div class="t" style="left:385px;top:820.0px;">115</div>
<div class="t" style="left:248px;top:845.4px;">12</div>
<div class="t" style="left:385px;top:845.4px;">115</div>
<div class="t l" style="left:247px;top:870.8px;">NumPickUp</div>
<div class="t" style="left:384px;top:870.8px;color:#6a9cf0;letter-spacing:.8px;">1<span class="z">0</span><span class="z">0</span>%</div>
<div class="t b" style="left:-221px;width:300px;text-align:right;top:896.1px;letter-spacing:-.7px;margin-top:1px;">CM602-L (1)</div>
<div class="t b" style="left:159px;top:896.1px;font-size:18.6px;margin-top:.5px;">3[3]</div>
<div class="t" style="left:159px;top:921.5px;">96</div>
<div class="t l" style="left:-259px;width:300px;text-align:right;top:946.8px;letter-spacing:1.3px;">NumTurn</div>
<div class="t" style="left:159px;top:946.8px;">8</div>
<div class="t l" style="left:-194px;width:300px;text-align:right;top:972.1px;letter-spacing:.2px;">AvgPickUpRate</div>
<div class="t b" style="left:160px;top:972.1px;color:#5b8ff0;letter-spacing:0;font-size:18px;margin-top:.8px;">67%</div>
<div class="t l" style="left:-293px;width:300px;text-align:right;top:997.5px;letter-spacing:.5px;">Time</div>
<div class="t b" style="left:160px;top:997.5px;color:#f0148c;letter-spacing:-.5px;font-size:17.8px;margin-top:.8px;">26.6</div>
<div class="t" style="left:248px;top:896.1px;">1</div>
<div class="t" style="left:385px;top:896.1px;">115</div>
<div class="t" style="left:248px;top:921.5px;">2</div>
<div class="t" style="left:385px;top:921.5px;">115</div>
<div class="t" style="left:248px;top:946.8px;">3</div>
<div class="t" style="left:385px;top:946.8px;">115</div>
<div class="t" style="left:248px;top:972.1px;">4</div>
<div class="t" style="left:385px;top:972.1px;">115</div>
<div class="t" style="left:248px;top:997.5px;">5</div>
<div class="t" style="left:385px;top:997.5px;">115</div>
<div class="t" style="left:448px;top:186.3px;">1</div>
<div class="t" style="left:524px;top:186.3px;">2</div>
<div class="t" style="left:588px;top:186.3px;">2</div>
<div class="t" style="left:653px;top:186.3px;">2</div>
<div class="t" style="left:717px;top:186.3px;">2</div>
<div class="t" style="left:793px;top:186.3px;">1</div>
<div class="t" style="left:857px;top:186.3px;">2</div>
<div class="t" style="left:933px;top:186.3px;">1</div>
<div class="t" style="left:997px;top:186.3px;">5</div>
<div class="t" style="left:448px;top:211.7px;">1</div>
<div class="t" style="left:524px;top:211.7px;">2</div>
<div class="t" style="left:588px;top:211.7px;">2</div>
<div class="t" style="left:653px;top:211.7px;">2</div>
<div class="t" style="left:717px;top:211.7px;">2</div>
<div class="t" style="left:793px;top:211.7px;">1</div>
<div class="t" style="left:857px;top:211.7px;">2</div>
<div class="t" style="left:933px;top:211.7px;">1</div>
<div class="t" style="left:997px;top:211.7px;">6</div>
<div class="t" style="left:448px;top:237.0px;">1</div>
<div class="t" style="left:524px;top:237.0px;">2</div>
<div class="t" style="left:588px;top:237.0px;">2</div>
<div class="t" style="left:653px;top:237.0px;">2</div>
<div class="t" style="left:717px;top:237.0px;">2</div>
<div class="t" style="left:793px;top:237.0px;">1</div>
<div class="t" style="left:857px;top:237.0px;">3</div>
<div class="t" style="left:933px;top:237.0px;">8</div>
<div class="t" style="left:997px;top:237.0px;">7</div>
<div class="t" style="left:448px;top:262.4px;">1</div>
<div class="t" style="left:524px;top:262.4px;">2</div>
<div class="t" style="left:588px;top:262.4px;">2</div>
<div class="t" style="left:653px;top:262.4px;">2</div>
<div class="t" style="left:717px;top:262.4px;">2</div>
<div class="t" style="left:793px;top:262.4px;">1</div>
<div class="t" style="left:857px;top:262.4px;">3</div>
<div class="t" style="left:933px;top:262.4px;">8</div>
<div class="t" style="left:997px;top:262.4px;">8</div>
<div class="t" style="left:448px;top:287.7px;">1</div>
<div class="t" style="left:524px;top:287.7px;">2</div>
<div class="t" style="left:588px;top:287.7px;">2</div>
<div class="t" style="left:653px;top:287.7px;">2</div>
<div class="t" style="left:717px;top:287.7px;">2</div>
<div class="t" style="left:793px;top:287.7px;">1</div>
<div class="t" style="left:857px;top:287.7px;">5</div>
<div class="t" style="left:933px;top:287.7px;">7</div>
<div class="t" style="left:997px;top:287.7px;">9</div>
<div class="t" style="left:448px;top:313.1px;">1</div>
<div class="t" style="left:524px;top:313.1px;">2</div>
<div class="t" style="left:588px;top:313.1px;">2</div>
<div class="t" style="left:653px;top:313.1px;">2</div>
<div class="t" style="left:717px;top:313.1px;">2</div>
<div class="t" style="left:793px;top:313.1px;">1</div>
<div class="t" style="left:857px;top:313.1px;">5</div>
<div class="t" style="left:933px;top:313.1px;">7</div>
<div class="t" style="left:997px;top:313.1px;">1<span class="z">0</span></div>
<div class="t b" style="left:446px;top:338.4px;font-size:19px;letter-spacing:-.3px;margin-top:.5px;">[1]</div>
<div class="t b" style="left:522px;top:338.4px;font-size:19px;letter-spacing:-.3px;margin-top:.5px;">[1]</div>
<div class="t b" style="left:586px;top:338.4px;font-size:19px;letter-spacing:-.3px;margin-top:.5px;">[1]</div>
<div class="t b" style="left:651px;top:338.4px;font-size:19px;letter-spacing:-.3px;margin-top:.5px;">[1]</div>
<div class="t b" style="left:715px;top:338.4px;font-size:19px;letter-spacing:-.3px;margin-top:.5px;">[1]</div>
<div class="t b" style="left:791px;top:338.4px;font-size:19px;letter-spacing:-.3px;margin-top:.5px;">[1]</div>
<div class="t b" style="left:856px;top:338.4px;color:#bcbcbc;font-size:18px;letter-spacing:-.3px;margin-top:.5px;">[3]</div>
<div class="t b" style="left:932px;top:338.4px;color:#bcbcbc;font-size:18px;letter-spacing:-.3px;margin-top:.5px;">[3]</div>
<div class="t l" style="left:997px;top:338.4px;letter-spacing:2px;font-size:18.5px;">[6]</div>
<div class="t" style="left:448px;top:363.8px;">2</div>
<div class="t" style="left:524px;top:363.8px;">1</div>
<div class="t" style="left:588px;top:363.8px;">1</div>
<div class="t" style="left:653px;top:363.8px;">1</div>
<div class="t" style="left:717px;top:363.8px;">1</div>
<div class="t" style="left:793px;top:363.8px;">2</div>
<div class="t" style="left:857px;top:363.8px;color:#fff;">1</div>
<div class="t" style="left:933px;top:363.8px;">2</div>
<div class="t" style="left:448px;top:389.1px;">2</div>
<div class="t" style="left:524px;top:389.1px;">1</div>
<div class="t" style="left:588px;top:389.1px;">1</div>
<div class="t" style="left:653px;top:389.1px;">1</div>
<div class="t" style="left:717px;top:389.1px;">1</div>
<div class="t" style="left:793px;top:389.1px;">2</div>
<div class="t" style="left:857px;top:389.1px;">1</div>
<div class="t" style="left:933px;top:389.1px;">2</div>
<div class="t" style="left:997px;top:389.1px;">4</div>
<div class="t" style="left:448px;top:414.4px;">2</div>
<div class="t" style="left:524px;top:414.4px;">1</div>
<div class="t" style="left:588px;top:414.4px;">1</div>
<div class="t" style="left:653px;top:414.4px;">1</div>
<div class="t" style="left:717px;top:414.4px;">1</div>
<div class="t" style="left:793px;top:414.4px;">2</div>
<div class="t" style="left:857px;top:414.4px;">4</div>
<div class="t" style="left:933px;top:414.4px;">3</div>
<div class="t" style="left:997px;top:414.4px;">3</div>
<div class="t" style="left:448px;top:439.8px;">2</div>
<div class="t" style="left:524px;top:439.8px;">1</div>
<div class="t" style="left:588px;top:439.8px;">1</div>
<div class="t" style="left:653px;top:439.8px;">1</div>
<div class="t" style="left:717px;top:439.8px;">1</div>
<div class="t" style="left:793px;top:439.8px;">2</div>
<div class="t" style="left:857px;top:439.8px;">4</div>
<div class="t" style="left:933px;top:439.8px;">4</div>
<div class="t" style="left:997px;top:439.8px;">2</div>
<div class="t" style="left:448px;top:465.2px;">2</div>
<div class="t" style="left:524px;top:465.2px;">1</div>
<div class="t" style="left:588px;top:465.2px;">1</div>
<div class="t" style="left:653px;top:465.2px;">1</div>
<div class="t" style="left:717px;top:465.2px;">1</div>
<div class="t" style="left:793px;top:465.2px;">2</div>
<div class="t" style="left:857px;top:465.2px;">6</div>
<div class="t" style="left:933px;top:465.2px;">5</div>
<div class="t" style="left:997px;top:465.2px;">1</div>
<div class="t" style="left:448px;top:490.5px;">2</div>
<div class="t" style="left:524px;top:490.5px;">1</div>
<div class="t" style="left:588px;top:490.5px;">1</div>
<div class="t" style="left:653px;top:490.5px;">1</div>
<div class="t" style="left:717px;top:490.5px;">1</div>
<div class="t" style="left:793px;top:490.5px;">2</div>
<div class="t" style="left:857px;top:490.5px;">6</div>
<div class="t" style="left:933px;top:490.5px;">6</div>
<div class="t b" style="left:446px;top:515.8px;font-size:19px;letter-spacing:-.3px;margin-top:.5px;">[1]</div>
<div class="t b" style="left:522px;top:515.8px;font-size:19px;letter-spacing:-.3px;margin-top:.5px;">[1]</div>
<div class="t b" style="left:586px;top:515.8px;font-size:19px;letter-spacing:-.3px;margin-top:.5px;">[1]</div>
<div class="t b" style="left:651px;top:515.8px;font-size:19px;letter-spacing:-.3px;margin-top:.5px;">[1]</div>
<div class="t b" style="left:715px;top:515.8px;font-size:19px;letter-spacing:-.3px;margin-top:.5px;">[1]</div>
<div class="t b" style="left:791px;top:515.8px;font-size:19px;letter-spacing:-.3px;margin-top:.5px;">[1]</div>
<div class="t b" style="left:856px;top:515.8px;color:#bcbcbc;font-size:18px;letter-spacing:-.3px;margin-top:.5px;">[3]</div>
<div class="t l" style="left:934px;top:515.8px;color:#f0ece0;">[5]</div>
<div class="t l" style="left:997px;top:515.8px;letter-spacing:2px;font-size:18.5px;">[4]</div>
<div class="t" style="left:448px;top:541.2px;">2</div>
<div class="t" style="left:524px;top:541.2px;">2</div>
<div class="t" style="left:588px;top:541.2px;">2</div>
<div class="t" style="left:653px;top:541.2px;">2</div>
<div class="t" style="left:717px;top:541.2px;">2</div>
<div class="t" style="left:793px;top:541.2px;">2</div>
<div class="t" style="left:857px;top:541.2px;">2</div>
<div class="t" style="left:933px;top:541.2px;">2</div>
<div class="t" style="left:997px;top:541.2px;">2</div>
<div class="t" style="left:1062px;top:541.2px;">1</div>
<div class="t" style="left:448px;top:566.5px;">2</div>
<div class="t" style="left:524px;top:566.5px;">2</div>
<div class="t" style="left:588px;top:566.5px;">2</div>
<div class="t" style="left:653px;top:566.5px;">2</div>
<div class="t" style="left:717px;top:566.5px;">2</div>
<div class="t" style="left:793px;top:566.5px;">2</div>
<div class="t" style="left:857px;top:566.5px;">2</div>
<div class="t" style="left:933px;top:566.5px;">2</div>
<div class="t" style="left:997px;top:566.5px;">2</div>
<div class="t" style="left:1062px;top:566.5px;">1</div>
<div class="t" style="left:448px;top:591.9px;">2</div>
<div class="t" style="left:524px;top:591.9px;">2</div>
<div class="t" style="left:588px;top:591.9px;">2</div>
<div class="t" style="left:653px;top:591.9px;">2</div>
<div class="t" style="left:717px;top:591.9px;">2</div>
<div class="t" style="left:793px;top:591.9px;">2</div>
<div class="t" style="left:857px;top:591.9px;">2</div>
<div class="t" style="left:933px;top:591.9px;">2</div>
<div class="t" style="left:997px;top:591.9px;">2</div>
<div class="t" style="left:1062px;top:591.9px;">1</div>
<div class="t" style="left:448px;top:617.2px;">2</div>
<div class="t" style="left:524px;top:617.2px;">2</div>
<div class="t" style="left:588px;top:617.2px;">2</div>
<div class="t" style="left:653px;top:617.2px;">2</div>
<div class="t" style="left:717px;top:617.2px;">2</div>
<div class="t" style="left:793px;top:617.2px;">2</div>
<div class="t" style="left:857px;top:617.2px;">2</div>
<div class="t" style="left:933px;top:617.2px;">2</div>
<div class="t" style="left:997px;top:617.2px;">2</div>
<div class="t" style="left:1062px;top:617.2px;">1</div>
<div class="t" style="left:448px;top:642.6px;">2</div>
<div class="t" style="left:524px;top:642.6px;">2</div>
<div class="t" style="left:588px;top:642.6px;">2</div>
<div class="t" style="left:653px;top:642.6px;">2</div>
<div class="t" style="left:717px;top:642.6px;">2</div>
<div class="t" style="left:793px;top:642.6px;">2</div>
<div class="t" style="left:857px;top:642.6px;">2</div>
<div class="t" style="left:933px;top:642.6px;">2</div>
<div class="t" style="left:997px;top:642.6px;">2</div>
<div class="t" style="left:1062px;top:642.6px;">2</div>
<div class="t" style="left:448px;top:668.0px;">2</div>
<div class="t" style="left:524px;top:668.0px;">2</div>
<div class="t" style="left:588px;top:668.0px;">2</div>
<div class="t" style="left:653px;top:668.0px;">2</div>
<div class="t" style="left:717px;top:668.0px;">2</div>
<div class="t" style="left:793px;top:668.0px;">2</div>
<div class="t" style="left:857px;top:668.0px;">2</div>
<div class="t" style="left:933px;top:668.0px;">2</div>
<div class="t" style="left:997px;top:668.0px;">2</div>
<div class="t" style="left:1062px;top:668.0px;">2</div>
<div class="t b" style="left:446px;top:693.3px;font-size:19px;letter-spacing:-.3px;margin-top:.5px;">[1]</div>
<div class="t b" style="left:522px;top:693.3px;font-size:19px;letter-spacing:-.3px;margin-top:.5px;">[1]</div>
<div class="t b" style="left:586px;top:693.3px;font-size:19px;letter-spacing:-.3px;margin-top:.5px;">[1]</div>
<div class="t b" style="left:651px;top:693.3px;font-size:19px;letter-spacing:-.3px;margin-top:.5px;">[1]</div>
<div class="t b" style="left:715px;top:693.3px;font-size:19px;letter-spacing:-.3px;margin-top:.5px;">[1]</div>
<div class="t b" style="left:791px;top:693.3px;font-size:19px;letter-spacing:-.3px;margin-top:.5px;">[1]</div>
<div class="t b" style="left:855px;top:693.3px;font-size:19px;letter-spacing:-.3px;margin-top:.5px;">[1]</div>
<div class="t b" style="left:931px;top:693.3px;font-size:19px;letter-spacing:-.3px;margin-top:.5px;">[1]</div>
<div class="t b" style="left:995px;top:693.3px;font-size:19px;letter-spacing:-.3px;margin-top:.5px;">[1]</div>
<div class="t b" style="left:1060px;top:693.3px;font-size:19px;letter-spacing:-.3px;margin-top:.5px;">[1]</div>
<div class="t" style="left:448px;top:718.6px;">1</div>
<div class="t" style="left:524px;top:718.6px;">1</div>
<div class="t" style="left:588px;top:718.6px;">1</div>
<div class="t" style="left:653px;top:718.6px;">1</div>
<div class="t" style="left:717px;top:718.6px;">1</div>
<div class="t" style="left:793px;top:718.6px;">1</div>
<div class="t" style="left:857px;top:718.6px;">1</div>
<div class="t" style="left:933px;top:718.6px;">1</div>
<div class="t" style="left:997px;top:718.6px;">1</div>
<div class="t" style="left:448px;top:744.0px;">1</div>
<div class="t" style="left:524px;top:744.0px;">1</div>
<div class="t" style="left:588px;top:744.0px;">1</div>
<div class="t" style="left:653px;top:744.0px;">1</div>
<div class="t" style="left:717px;top:744.0px;">1</div>
<div class="t" style="left:793px;top:744.0px;">1</div>
<div class="t" style="left:857px;top:744.0px;">1</div>
<div class="t" style="left:933px;top:744.0px;">1</div>
<div class="t" style="left:997px;top:744.0px;">1</div>
<div class="t" style="left:448px;top:769.4px;">1</div>
<div class="t" style="left:524px;top:769.4px;">1</div>
<div class="t" style="left:588px;top:769.4px;">1</div>
<div class="t" style="left:653px;top:769.4px;">1</div>
<div class="t" style="left:717px;top:769.4px;">1</div>
<div class="t" style="left:793px;top:769.4px;">1</div>
<div class="t" style="left:857px;top:769.4px;">1</div>
<div class="t" style="left:933px;top:769.4px;">1</div>
<div class="t" style="left:997px;top:769.4px;">1</div>
<div class="t" style="left:448px;top:794.7px;">1</div>
<div class="t" style="left:524px;top:794.7px;">1</div>
<div class="t" style="left:588px;top:794.7px;">1</div>
<div class="t" style="left:653px;top:794.7px;">1</div>
<div class="t" style="left:717px;top:794.7px;">1</div>
<div class="t" style="left:793px;top:794.7px;">1</div>
<div class="t" style="left:857px;top:794.7px;">1</div>
<div class="t" style="left:933px;top:794.7px;">1</div>
<div class="t" style="left:997px;top:794.7px;">1</div>
<div class="t" style="left:448px;top:820.0px;">1</div>
<div class="t" style="left:524px;top:820.0px;">1</div>
<div class="t" style="left:588px;top:820.0px;">1</div>
<div class="t" style="left:653px;top:820.0px;">1</div>
<div class="t" style="left:717px;top:820.0px;">1</div>
<div class="t" style="left:793px;top:820.0px;">1</div>
<div class="t" style="left:857px;top:820.0px;">1</div>
<div class="t" style="left:933px;top:820.0px;">1</div>
<div class="t" style="left:997px;top:820.0px;">1</div>
<div class="t" style="left:448px;top:845.4px;">1</div>
<div class="t" style="left:524px;top:845.4px;">1</div>
<div class="t" style="left:588px;top:845.4px;">1</div>
<div class="t" style="left:653px;top:845.4px;">1</div>
<div class="t" style="left:717px;top:845.4px;">1</div>
<div class="t" style="left:793px;top:845.4px;">1</div>
<div class="t" style="left:857px;top:845.4px;">1</div>
<div class="t" style="left:933px;top:845.4px;">1</div>
<div class="t" style="left:997px;top:845.4px;">1</div>
<div class="t b" style="left:446px;top:870.8px;font-size:19px;letter-spacing:-.3px;margin-top:.5px;">[1]</div>
<div class="t b" style="left:522px;top:870.8px;font-size:19px;letter-spacing:-.3px;margin-top:.5px;">[1]</div>
<div class="t b" style="left:586px;top:870.8px;font-size:19px;letter-spacing:-.3px;margin-top:.5px;">[1]</div>
<div class="t b" style="left:651px;top:870.8px;font-size:19px;letter-spacing:-.3px;margin-top:.5px;">[1]</div>
<div class="t b" style="left:715px;top:870.8px;font-size:19px;letter-spacing:-.3px;margin-top:.5px;">[1]</div>
<div class="t b" style="left:791px;top:870.8px;font-size:19px;letter-spacing:-.3px;margin-top:.5px;">[1]</div>
<div class="t b" style="left:855px;top:870.8px;font-size:19px;letter-spacing:-.3px;margin-top:.5px;">[1]</div>
<div class="t b" style="left:931px;top:870.8px;font-size:19px;letter-spacing:-.3px;margin-top:.5px;">[1]</div>
<div class="t b" style="left:995px;top:870.8px;font-size:19px;letter-spacing:-.3px;margin-top:.5px;">[1]</div>
<div class="t" style="left:448px;top:896.1px;">1</div>
<div class="t" style="left:524px;top:896.1px;">2</div>
<div class="t" style="left:588px;top:896.1px;">3</div>
<div class="t" style="left:653px;top:896.1px;">4</div>
<div class="t" style="left:717px;top:896.1px;">1</div>
<div class="t" style="left:793px;top:896.1px;">1</div>
<div class="t" style="left:857px;top:896.1px;">1<span class="z">0</span></div>
<div class="t" style="left:933px;top:896.1px;">11</div>
<div class="t" style="left:448px;top:921.5px;">1</div>
<div class="t" style="left:524px;top:921.5px;">2</div>
<div class="t" style="left:588px;top:921.5px;">3</div>
<div class="t" style="left:653px;top:921.5px;">4</div>
<div class="t" style="left:717px;top:921.5px;">4</div>
<div class="t" style="left:793px;top:921.5px;">4</div>
<div class="t" style="left:857px;top:921.5px;">9</div>
<div class="t" style="left:933px;top:921.5px;">12</div>
<div class="t" style="left:448px;top:946.8px;">1</div>
<div class="t" style="left:524px;top:946.8px;">2</div>
<div class="t" style="left:588px;top:946.8px;">3</div>
<div class="t" style="left:653px;top:946.8px;">3</div>
<div class="t" style="left:717px;top:946.8px;">1</div>
<div class="t" style="left:793px;top:946.8px;">1</div>
<div class="t" style="left:857px;top:946.8px;">1<span class="z">0</span></div>
<div class="t" style="left:933px;top:946.8px;">7</div>
<div class="t" style="left:448px;top:972.1px;">1</div>
<div class="t" style="left:524px;top:972.1px;">2</div>
<div class="t" style="left:588px;top:972.1px;">3</div>
<div class="t" style="left:653px;top:972.1px;">4</div>
<div class="t" style="left:717px;top:972.1px;">4</div>
<div class="t" style="left:793px;top:972.1px;">4</div>
<div class="t" style="left:857px;top:972.1px;">9</div>
<div class="t" style="left:933px;top:972.1px;">8</div>
<div class="t" style="left:448px;top:997.5px;">1</div>
<div class="t" style="left:524px;top:997.5px;">2</div>
<div class="t" style="left:588px;top:997.5px;">3</div>
<div class="t" style="left:653px;top:997.5px;">3</div>
<div class="t" style="left:717px;top:997.5px;">1</div>
<div class="t" style="left:793px;top:997.5px;">1</div>
<div class="t" style="left:857px;top:997.5px;">8</div>
<div class="t" style="left:933px;top:997.5px;">9</div>
<div class="abs" style="left:0;top:1024px;width:1434px;height:6px;background:linear-gradient(#fbf9f2,#f3f0e6)"></div>
<div class="abs" style="left:0;top:1030px;width:1434px;height:2px;background:#857c6a"></div>
<div class="abs" style="left:0;top:1032px;width:1434px;height:3px;background:#f4f1e6"></div>
<div class="abs" style="left:0;top:1035px;width:1434px;height:2px;background:#b0ac9c"></div>
<div class="abs" style="left:0;top:1037px;width:1434px;height:24px;background:#ece9d8"></div>
<div class="abs" style="left:53px;top:1036px;width:1px;height:23px;background:#fff"></div>
<div class="abs" style="left:59px;top:1036px;width:1px;height:23px;background:#aca899"></div>
<div class="abs" style="left:-10px;top:1039px;width:28px;text-align:right;font-size:15.9px;letter-spacing:-.1px;line-height:20px;color:#111">140</div>
<div class="abs" style="left:62px;top:1039px;font-size:15.9px;letter-spacing:-.1px;line-height:20px;color:#111;white-space:nowrap">Sequence of PickUp</div>
<div class="abs" style="left:530px;top:1039px;width:247px;text-align:right;font-size:15.9px;letter-spacing:.3px;line-height:20px;color:#111;white-space:nowrap">C:\Data\Demo\ALTRIAOut(Seq).txt</div>
<div class="abs" style="left:0;top:1060px;width:1434px;height:16px;background:linear-gradient(#3a80f0,#2663e0 40%,#245edc)"></div>
<div class="abs" style="left:-20px;top:1066px;width:112px;height:20px;border-radius:0 14px 0 0;background:linear-gradient(#6cbf6c,#3c9a3c 50%,#2f8c2f)"></div>
<div class="abs" style="left:127px;top:1071px;width:140px;height:10px;border-radius:4px 4px 0 0;background:#3c7ff0"></div>
<div class="abs" style="left:638px;top:1071px;width:168px;height:10px;border-radius:4px 4px 0 0;background:#3c7ff0"></div>
<div class="abs" style="left:809px;top:1071px;width:166px;height:10px;border-radius:4px 4px 0 0;background:#3c7ff0"></div>
<div class="abs" style="left:978px;top:1071px;width:171px;height:10px;border-radius:4px 4px 0 0;background:#1e4fc0"></div>
<div class="abs" style="left:1152px;top:1071px;width:169px;height:10px;border-radius:4px 4px 0 0;background:#3c7ff0"></div>
<div class="abs" style="left:1343px;top:1067px;width:91px;height:10px;background:#18a0e8;border-left:1px solid #0c58c0"></div>
<div class="abs" style="left:273px;top:405px;width:352px;height:700px;background:rgba(0,0,0,.07)"></div>
<div class="abs" style="left:269px;top:400px;width:352px;height:700px;background:#fff;border:1px solid #9d998b"></div>
<div class="abs" style="left:273px;top:647px;width:344px;height:25px;background:#316ac5"></div>
<div class="mi" style="top:407.2px;color:#111">PartsNo(Def)</div>
<div class="mk" style="top:407.2px;color:#111">Ctrl+Q</div>
<div class="mi" style="top:432.7px;color:#111">Parts Name</div>
<div class="mi" style="top:458.2px;color:#111">Comment</div>
<div class="mi" style="top:483.7px;color:#111">Feeder Address</div>
<div class="arr" style="top:486.5px"></div>
<div class="mi" style="top:509.2px;color:#111">Sequence of PickUp</div>
<svg class="chk" style="top:514.0px" width="12" height="12" viewBox="0 0 12 12"><path d="M1.2 6 L4.7 10 L10.9 2" fill="none" stroke="#111" stroke-width="2.8"/></svg>
<div class="mi" style="top:534.7px;color:#111">Sequence of Mount</div>
<div class="mi" style="top:560.2px;color:#111">Mount Priority Sequence</div>
<div class="mi" style="top:585.7px;color:#111">Part Information Details</div>
<div class="arr" style="top:588.5px"></div>
<div class="mi" style="top:624.2px;color:#111">Gang Pick Up Flag(Def)</div>
<div class="mk" style="top:624.2px;color:#111">F7</div>
<div class="mi" style="top:649.7px;color:#fff">Number Pick Up</div>
<div class="mk" style="top:649.7px;color:#fff">F8</div>
<svg class="chk" style="top:654.5px" width="12" height="12" viewBox="0 0 12 12"><path d="M1.2 6 L4.7 10 L10.9 2" fill="none" stroke="#fff" stroke-width="2.8"/></svg>
<div class="mi" style="top:688.2px;color:#111">Nozzle No(Def)</div>
<svg class="chk" style="top:693.0px" width="12" height="12" viewBox="0 0 12 12"><path d="M1.2 6 L4.7 10 L10.9 2" fill="none" stroke="#111" stroke-width="2.8"/></svg>
<div class="mi" style="top:713.7px;color:#111">Nozzle Stocker No</div>
<div class="mi" style="top:752.2px;color:#111">Parts Information Details List</div>
<div class="arr" style="top:755.0px"></div>
<div class="mi" style="top:777.7px;color:#111">Feeder Arrange List</div>
<div class="arr" style="top:780.5px"></div>
<div class="mi" style="top:803.2px;color:#111">Nozzle Stocker List</div>
<div class="mi" style="top:842.2px;color:#111">Mark(Set Color) Selected Range</div>
<div class="mk" style="top:842.2px;color:#111">F9</div>
<div class="mi" style="top:867.2px;color:#111">Cancel Selected Range Color</div>
<div class="mk" style="top:867.2px;color:#111">F10</div>
<div class="mi" style="top:892.7px;color:#111">Cancel All Color</div>
<div class="mk" style="top:892.7px;color:#111">F11</div>
<div class="mi" style="top:918.2px;color:#111">Distribution(Turn)</div>
<div class="mk" style="top:918.2px;color:#111">Ctrl+D</div>
<div class="mi" style="top:956.7px;color:#111">Scroll Lock</div>
<div class="mi" style="top:982.2px;color:#111">Scroll Lock Cancel</div>
<div class="mi" style="top:1007.2px;color:#111">Small View</div>
<div class="mi" style="top:1046.2px;color:#111">Select Range Copy</div>
<div class="mk" style="top:1046.2px;color:#111">Ctrl+C</div>
<div class="sep" style="top:613px"></div>
<div class="sep" style="top:677px"></div>
<div class="sep" style="top:741px"></div>
<div class="sep" style="top:830px"></div>
<div class="sep" style="top:945px"></div>
<div class="sep" style="top:1034px"></div>
<div class="sep" style="top:1073px"></div>
<svg class="abs" style="left:0;top:0" width="1434" height="1076" viewBox="0 0 1434 1076"><path d="M390 659 L1304 696 L1304 694 Q1304 674 1324 674 L1425 674 Q1445 674 1445 694 L1445 789 Q1445 809 1425 809 L1324 809 Q1304 809 1304 789 L1304 730 Z" fill="#ff00ff" stroke="#000" stroke-width="1.9" stroke-linejoin="round"/></svg>
</div></body></html>
